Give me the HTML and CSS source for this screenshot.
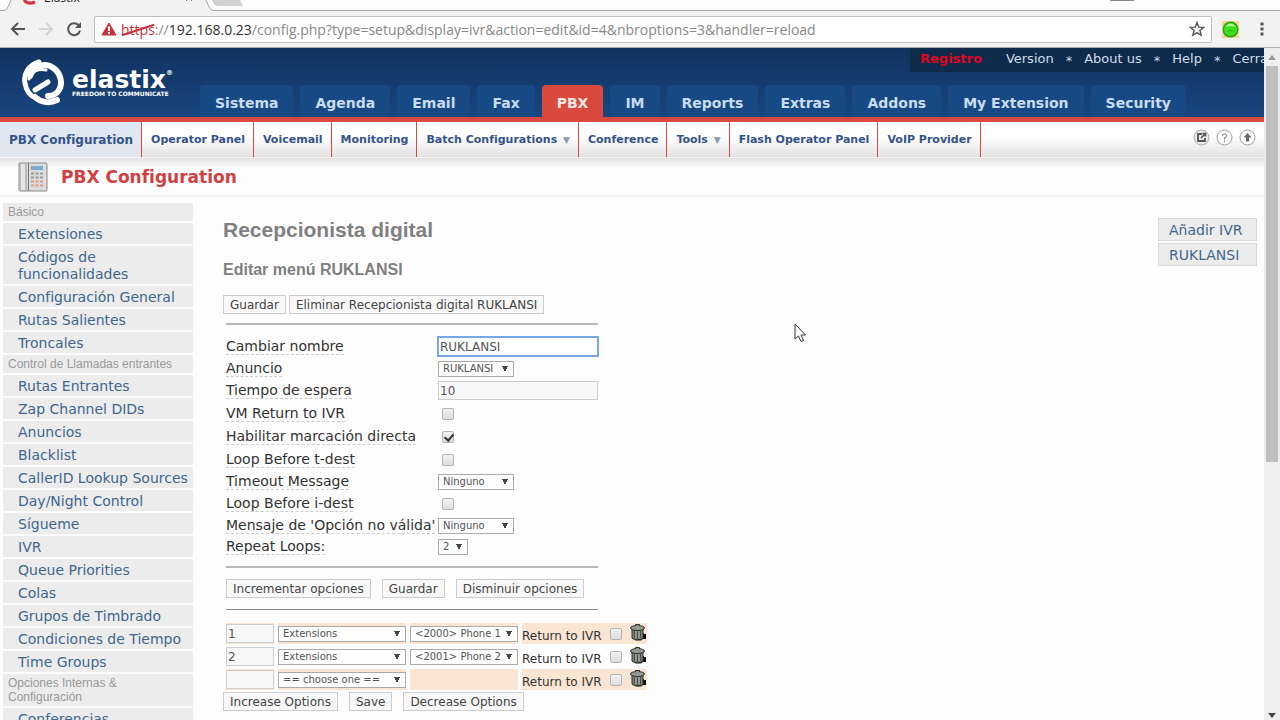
FILE: index.html
```html
<!DOCTYPE html>
<html lang="es">

<head>
  <meta charset="UTF-8">
  <meta name="viewport" content="width=device-width, initial-scale=1.0">
  <title>Elastix</title>
  <link rel="stylesheet" href="styles.css">
</head>

<body>
  <div class="browser">
    <div class="tabstrip">
      <svg class="tab-shape" width="250" height="11" viewBox="0 0 250 11">
        <path d="M0 10.500H4Q7 10 8.500 6L11 0H206L209 7Q210.500 10.500 214 10.500H250V11H0Z" fill="#f2f2f2" />
        <path d="M0 10.500H4Q7 10 8.500 6L11 0M206 0L209 7Q210.500 10.500 214 10.500H250" fill="none" stroke="#aaa" />
        <path d="M212 0H240L243 6H218Q215 6 214 4Z" fill="#d2d2d2" />
        <path d="M24 0Q28 5 35 2" fill="none" stroke="#d8343c" stroke-width="3" />
        <path d="M186 1L190 -3M192 1L188 -3" stroke="#777" />
      </svg>
      <span class="tab-title">Elastix</span>
      <span class="minimize"></span>
    </div>

    <div class="toolbar">
      <button class="tool" aria-label="Back">
        <svg width="16" height="16" viewBox="0 0 16 16"><path d="M15 8H2.500M8 2L2 8L8 14" fill="none" stroke="#555" stroke-width="2" /></svg>
      </button>
      <button class="tool" aria-label="Forward">
        <svg width="16" height="16" viewBox="0 0 16 16"><path d="M1 8H13.500M8 2L14 8L8 14" fill="none" stroke="#d4d4d4" stroke-width="2" /></svg>
      </button>
      <button class="tool" aria-label="Reload">
        <svg width="16" height="16" viewBox="0 0 16 16"><path d="M12.500 4A6 6 0 1 0 14 9.500" fill="none" stroke="#555" stroke-width="2" /><path d="M15 1V7H9Z" fill="#555" /></svg>
      </button>
      <div class="omnibox">
        <svg width="16" height="14" viewBox="0 0 16 14"><path d="M8 1L15 13H1Z" fill="#c5343d" stroke="#c5343d" stroke-linejoin="round" /><path d="M8 4.500V9M8 10V12" stroke="#fff" stroke-width="2" /></svg>
        <label for="url"><span class="scheme">https</span>://<span class="host">192.168.0.23</span></label>
        <input id="url" class="url" value="/config.php?type=setup&amp;display=ivr&amp;action=edit&amp;id=4&amp;nbroptions=3&amp;handler=reload">
        <svg width="16" height="16" viewBox="0 0 16 16"><path d="M8 1.500L9.800 6.100L14.700 6.400L10.900 9.500L12.200 14.300L8 11.600L3.800 14.300L5.100 9.500L1.300 6.400L6.200 6.100Z" fill="none" stroke="#555" stroke-width="1.400" /></svg>
      </div>
      <svg class="extension" width="17" height="17" viewBox="0 0 17 17">
        <rect width="17" height="17" fill="#f4d58b" />
        <circle cx="8.500" cy="8.500" r="8" fill="#28a51c" />
        <circle cx="8.500" cy="8.500" r="6.500" fill="#3fe01d" />
        <path d="M3 6Q8.500 -1 14 6Q8.500 4 3 6Z" fill="#b4f5a0" />
        <path d="M4 11Q8.500 6 13 11Q8.500 9 4 11Z" fill="#22b515" />
      </svg>
      <button class="tool menu" aria-label="Menu">
        <svg width="4" height="14" viewBox="0 0 4 14"><path d="M0.500 0.500h3v3h-3zM0.500 5.500h3v3h-3zM0.500 10.500h3v3h-3z" fill="#555" /></svg>
      </button>
    </div>
  </div>

  <div class="viewport">
    <div class="page">
      <header class="header">
        <div class="brand">
          <svg width="44" height="50" viewBox="0 0 44 50">
            <g fill="none" stroke="#fff" stroke-linecap="round">
              <path d="M18 5C8 8 2 17 4 26C5 33 9 39 15 41" stroke-width="5" />
              <path d="M9 19C12 10 21 6 29 9C38 13 42 23 39 31C37 36 33 39 27 39" stroke-width="6" />
              <path d="M14 40C19 45 28 47 36 43" stroke-width="6" />
              <path d="M14 33L27 25" stroke-width="5" />
              <path d="M8 22C11 14 18 11 25 13" stroke-width="3" />
            </g>
          </svg>
          <div class="brand-text">
            <span class="brand-name">elastix<sup>®</sup></span>
            <span class="brand-slogan">FREEDOM TO COMMUNICATE</span>
          </div>
        </div>
        <div class="header-right">
          <div class="userbar">
            <a href="#" class="register">Registro</a>
            <a href="#">Version</a>
            <span class="star">*</span>
            <a href="#">About us</a>
            <span class="star">*</span>
            <a href="#">Help</a>
            <span class="star">*</span>
            <a href="#">Cerrar</a>
          </div>
          <nav class="tabs">
            <a href="#">Sistema</a>
            <a href="#">Agenda</a>
            <a href="#">Email</a>
            <a href="#">Fax</a>
            <a href="#" class="active">PBX</a>
            <a href="#">IM</a>
            <a href="#">Reports</a>
            <a href="#">Extras</a>
            <a href="#">Addons</a>
            <a href="#">My Extension</a>
            <a href="#">Security</a>
          </nav>
        </div>
      </header>

      <nav class="subnav">
        <a href="#" class="active">PBX Configuration</a>
        <a href="#">Operator Panel</a>
        <a href="#">Voicemail</a>
        <a href="#">Monitoring</a>
        <a href="#">Batch Configurations <span class="caret">▼</span></a>
        <a href="#">Conference</a>
        <a href="#">Tools <span class="caret">▼</span></a>
        <a href="#">Flash Operator Panel</a>
        <a href="#">VoIP Provider</a>
        <div class="subnav-tools">
          <button aria-label="Open in window">
            <svg width="17" height="17" viewBox="0 0 17 17"><circle cx="8.500" cy="8.500" r="7.500" fill="#e8e8e8" stroke="#aaa" /><path d="M9 5H5V12H12V9" fill="none" stroke="#555" stroke-width="1.800" /><path d="M8 9L12 5M9.500 4.500H12.500V7.500" fill="none" stroke="#555" stroke-width="1.600" /></svg>
          </button>
          <button aria-label="Help">
            <svg width="17" height="17" viewBox="0 0 17 17"><circle cx="8.500" cy="8.500" r="7.500" fill="#fff" stroke="#999" /><path d="M6.500 7Q6.500 5 8.500 5T10.500 7Q10.500 8 8.500 9V10.500M8.500 11.500V13" fill="none" stroke="#888" stroke-width="1.200" /></svg>
          </button>
          <button aria-label="Collapse">
            <svg width="17" height="17" viewBox="0 0 17 17"><circle cx="8.500" cy="8.500" r="7.500" fill="#fff" stroke="#999" /><path d="M8.500 4L12.500 8.500H10V12.500H7V8.500H4.500Z" fill="#666" /></svg>
          </button>
        </div>
      </nav>

      <div class="titlebar">
        <svg width="30" height="30" viewBox="0 0 30 30">
          <rect x="1" y="1" width="28" height="28" rx="1" fill="#dcdcdc" stroke="#888" />
          <rect x="2" y="2" width="7" height="26" fill="#bbb" />
          <rect x="3" y="2" width="4" height="26" fill="#e6e6e6" />
          <path d="M10.500 1V29" stroke="#777" />
          <rect x="13" y="4" width="12" height="4" fill="#7ba9d4" />
          <path d="M13 11.500H25M13 15.500H25" stroke="#999" stroke-width="2" stroke-dasharray="3 1.500" />
          <path d="M13 19.500H25M13 23.500H25" stroke="#e0987a" stroke-width="2" stroke-dasharray="3 1.500" />
        </svg>
        <h1>PBX Configuration</h1>
      </div>

      <div class="columns">
        <aside class="sidebar">
          <h4>Básico</h4>
          <a href="#">Extensiones</a>
          <a href="#">Códigos de funcionalidades</a>
          <a href="#">Configuración General</a>
          <a href="#">Rutas Salientes</a>
          <a href="#">Troncales</a>
          <h4>Control de Llamadas entrantes</h4>
          <a href="#">Rutas Entrantes</a>
          <a href="#">Zap Channel DIDs</a>
          <a href="#">Anuncios</a>
          <a href="#">Blacklist</a>
          <a href="#">CallerID Lookup Sources</a>
          <a href="#">Day/Night Control</a>
          <a href="#">Sígueme</a>
          <a href="#">IVR</a>
          <a href="#">Queue Priorities</a>
          <a href="#">Colas</a>
          <a href="#">Grupos de Timbrado</a>
          <a href="#">Condiciones de Tiempo</a>
          <a href="#">Time Groups</a>
          <h4>Opciones Internas &amp; Configuración</h4>
          <a href="#">Conferencias</a>
        </aside>

        <main class="content">
          <h2>Recepcionista digital</h2>
          <h3>Editar menú RUKLANSI</h3>

          <div class="actions">
            <button>Guardar</button>
            <button>Eliminar Recepcionista digital RUKLANSI</button>
          </div>

          <form class="ivr">
            <hr>
            <table class="settings">
              <tr class="row-text">
                <td><label for="name">Cambiar nombre</label></td>
                <td><input type="text" id="name" class="focused" value="RUKLANSI"></td>
              </tr>
              <tr>
                <td><label for="announcement">Anuncio</label></td>
                <td><select id="announcement" class="medium"><option>RUKLANSI</option></select></td>
              </tr>
              <tr class="row-text">
                <td><label for="timeout">Tiempo de espera</label></td>
                <td><input type="text" id="timeout" value="10"></td>
              </tr>
              <tr class="row-check">
                <td><label for="vmreturn">VM Return to IVR</label></td>
                <td><input type="checkbox" id="vmreturn"></td>
              </tr>
              <tr class="row-check">
                <td><label for="directdial">Habilitar marcación directa</label></td>
                <td><input type="checkbox" id="directdial" checked></td>
              </tr>
              <tr class="row-check">
                <td><label for="loopt">Loop Before t-dest</label></td>
                <td><input type="checkbox" id="loopt"></td>
              </tr>
              <tr>
                <td><label for="timeoutmsg">Timeout Message</label></td>
                <td><select id="timeoutmsg" class="medium"><option>Ninguno</option></select></td>
              </tr>
              <tr class="row-check">
                <td><label for="loopi">Loop Before i-dest</label></td>
                <td><input type="checkbox" id="loopi"></td>
              </tr>
              <tr>
                <td><label for="invalidmsg">Mensaje de 'Opción no válida'</label></td>
                <td><select id="invalidmsg" class="medium"><option>Ninguno</option></select></td>
              </tr>
              <tr>
                <td><label for="loops">Repeat Loops:</label></td>
                <td><select id="loops" class="small"><option>2</option></select></td>
              </tr>
            </table>
            <hr>
            <div class="actions spaced">
              <button type="button">Incrementar opciones</button>
              <button type="button">Guardar</button>
              <button type="button">Disminuir opciones</button>
            </div>
            <hr class="dark">
            <table class="options">
              <tr class="odd">
                <td><input type="text" aria-label="Option 1" value="1"></td>
                <td><select class="wide" aria-label="Destination 1"><option>Extensions</option></select></td>
                <td><select class="target" aria-label="Extension 1"><option>&lt;2000&gt; Phone 1</option></select></td>
                <td class="return">
                  <div>
                    <label for="return1">Return to IVR</label>
                    <input type="checkbox" id="return1">
                    <button type="button" class="trash" aria-label="Delete 1"><svg width="17" height="18" viewBox="0 0 17 18"><use href="#trash" /></svg></button>
                  </div>
                </td>
              </tr>
              <tr>
                <td><input type="text" aria-label="Option 2" value="2"></td>
                <td><select class="wide" aria-label="Destination 2"><option>Extensions</option></select></td>
                <td><select class="target" aria-label="Extension 2"><option>&lt;2001&gt; Phone 2</option></select></td>
                <td class="return">
                  <div>
                    <label for="return2">Return to IVR</label>
                    <input type="checkbox" id="return2">
                    <button type="button" class="trash" aria-label="Delete 2"><svg width="17" height="18" viewBox="0 0 17 18"><use href="#trash" /></svg></button>
                  </div>
                </td>
              </tr>
              <tr class="odd">
                <td><input type="text" aria-label="Option 3"></td>
                <td><select class="wide" aria-label="Destination 3"><option>== choose one ==</option></select></td>
                <td></td>
                <td class="return">
                  <div>
                    <label for="return3">Return to IVR</label>
                    <input type="checkbox" id="return3">
                    <button type="button" class="trash" aria-label="Delete 3"><svg width="17" height="18" viewBox="0 0 17 18"><use href="#trash" /></svg></button>
                  </div>
                </td>
              </tr>
            </table>
          </form>

          <div class="actions spaced">
            <button>Increase Options</button>
            <button>Save</button>
            <button>Decrease Options</button>
          </div>
        </main>

        <nav class="ivr-list">
          <a href="#">Añadir IVR</a>
          <a href="#">RUKLANSI</a>
        </nav>
      </div>
    </div>

    <div class="scrollbar">
      <svg width="16" height="18" viewBox="0 0 16 18"><path d="M4 12L8 7L12 12Z" fill="#999" /></svg>
      <div class="thumb"></div>
      <svg width="16" height="10" viewBox="0 0 16 10"><path d="M4 3H12L8 8Z" fill="#444" /></svg>
    </div>
  </div>

  <svg class="pointer" width="13" height="20" viewBox="0 0 13 20">
    <path d="M1 1V16L4.500 13L7 18.500L9.500 17.500L7 12H11.500Z" fill="#fff" stroke="#333" />
  </svg>

  <svg class="symbols" width="0" height="0">
    <symbol id="trash" viewBox="0 0 17 18">
      <path d="M12 10H14V11H16V16H13L11 17.500H5Z" fill="#111" />
      <path d="M2 6H13V15Q13 16.500 7.500 16.500T2 15Z" fill="#7d857c" stroke="#2b302b" />
      <path d="M4.500 8V15M7.500 8.500V16M10.500 8V15" stroke="#4a504a" />
      <path d="M6 8V15.500M9 8V15.500" stroke="#a5ada5" />
      <ellipse cx="7.500" cy="5" rx="7" ry="2.500" fill="#959c95" stroke="#2b302b" />
      <path d="M5.500 3V1.500H9.500V3" fill="#8b928b" stroke="#2b302b" />
    </symbol>
  </svg>
</body>

</html>
```
FILE: styles.css
```css
* {
  box-sizing: border-box;
  margin: 0;
}

body {
  font-family: "DejaVu Sans", sans-serif;
  font-size: 14px;
  height: 100vh;
  display: flex;
  flex-direction: column;
  overflow: hidden;
  background: #fdfdfd;
  color: #333;
}

a {
  text-decoration: none;
}

button,
input,
select {
  font-family: inherit;
}

/* Browser window */
.browser {
  flex: none;
  font-family: "Open Sans", sans-serif;
}

.tabstrip {
  display: flex;
  align-items: flex-start;
  height: 11px;
  overflow: hidden;
  background: linear-gradient(#fdfdfd 10px, #aaa 10px);
}

.tab-shape {
  flex: none;
}

.tab-title {
  font-size: 12px;
  line-height: 16px;
  margin: -10px 0 0 -206px;
  color: #222;
}

.minimize {
  width: 24px;
  height: 1px;
  margin-left: auto;
  margin-right: 146px;
  background: #888;
}

.toolbar {
  display: flex;
  align-items: center;
  gap: 12px;
  height: 37px;
  padding: 0 16px 0 10px;
  background: #f2f2f2;
  border-bottom: 1px solid #a9adb3;
}

.tool {
  display: flex;
  padding: 0;
  border: 0;
  background: none;
}

.omnibox {
  flex: 1;
  display: flex;
  align-items: center;
  height: 27px;
  padding: 0 6px;
  border: 1px solid #bdbdbd;
  border-radius: 2px;
  background: #fff;
  font-size: 14px;
  color: #888;
}

.omnibox label {
  margin-left: 4px;
}

.scheme {
  position: relative;
  color: #c5343d;
}

.scheme::after {
  content: "";
  position: absolute;
  left: 0;
  right: 0;
  top: 9px;
  height: 2px;
  background: #c5343d;
  transform: rotate(-18deg);
}

.host {
  color: #333;
}

.url {
  flex: 1;
  padding: 0;
  border: 0;
  outline: 0;
  font-size: 14px;
  color: #888;
  background: none;
}

.extension {
  margin-left: -2px;
}

.menu {
  margin-left: 9px;
}

/* Viewport */
.viewport {
  flex: 1;
  min-height: 0;
  display: flex;
}

.page {
  flex: 1;
  min-width: 0;
  overflow: hidden;
}

.scrollbar {
  flex: none;
  width: 16px;
  display: flex;
  flex-direction: column;
  justify-content: space-between;
  background: #eee;
}

.thumb {
  height: 59%;
  margin: 0 2px auto;
  background: #bfbfbf;
}

/* Header */
.header {
  display: flex;
  height: 74px;
  background: linear-gradient(#11325f, #184680);
  border-bottom: 5px solid #d9493d;
}

.brand {
  flex: none;
  width: 200px;
  padding: 9px 0 0 21px;
  display: flex;
  gap: 7px;
  color: #fff;
}

.brand-text {
  padding-top: 11px;
  display: flex;
  flex-direction: column;
}

.brand-name {
  font-size: 25px;
  font-weight: bold;
  line-height: 23px;
}

.brand-name sup {
  font-size: 7px;
  line-height: 0;
  vertical-align: 13px;
}

.brand-slogan {
  font-size: 6px;
  font-weight: bold;
  line-height: 6px;
  white-space: nowrap;
}

.header-right {
  flex: 1;
  min-width: 0;
  display: flex;
  flex-direction: column;
  justify-content: space-between;
}

.userbar {
  align-self: flex-end;
  width: 354px;
  height: 24px;
  padding-left: 10px;
  display: flex;
  gap: 12px;
  overflow: hidden;
  white-space: nowrap;
  background: #0e2b4b;
  font-size: 13px;
  line-height: 22px;
}

.userbar a,
.star {
  color: #cfdcec;
}

.userbar .register {
  margin-right: 12px;
  font-weight: bold;
  color: #e0041f;
}

.star {
  line-height: 26px;
}

.tabs {
  display: flex;
  gap: 7px;
}

.tabs a {
  padding: 0 15px;
  border-radius: 4px 4px 0 0;
  background: #174a85;
  color: #c9dcf2;
  font-weight: bold;
  line-height: 36px;
  height: 32px;
  white-space: nowrap;
}

.tabs .active {
  background: #d9493d;
  color: #fbe8e6;
}

.subnav {
  display: flex;
  height: 36px;
  background: linear-gradient(#fff 40%, #e2e2e2);
  border-bottom: 1px solid #f4f4f4;
}

.subnav a {
  padding: 0 8px 0 9px;
  border-right: 1px solid #d9493d;
  color: #34538a;
  font-size: 11px;
  font-weight: bold;
  line-height: 36px;
  white-space: nowrap;
}

.subnav .active {
  background: linear-gradient(#dde7f5, #e2e6ee);
  font-size: 12px;
}

.caret {
  margin-left: 2px;
  color: #8a9cb5;
  font-size: 9px;
}

.subnav-tools {
  display: flex;
  gap: 6px;
  margin: 7px 8px 0 auto;
}

.subnav-tools button {
  display: flex;
  height: 17px;
  padding: 0;
  border: 0;
  background: none;
}

.titlebar {
  display: flex;
  align-items: center;
  gap: 13px;
  height: 39px;
  padding-left: 18px;
  background: linear-gradient(#e2e2e2, #fdfdfd 10px);
  border-bottom: 2px solid #f3f3f3;
}

.titlebar h1 {
  font-size: 17px;
  line-height: 20px;
  color: #cf4142;
}

.columns {
  display: flex;
}

/* Sidebar */
.sidebar {
  flex: none;
  width: 193px;
  padding: 6px 0 0 3px;
}

.sidebar h4,
.sidebar a {
  display: block;
  margin-bottom: 2px;
  padding: 3px 0 1px 15px;
  background: #ececec;
  color: #40678f;
  line-height: 17px;
}

.sidebar h4 {
  padding: 2px 5px;
  font: 12px/14px "Liberation Sans", sans-serif;
  color: #999;
}

.sidebar h4:last-of-type {
  padding-right: 60px;
}

/* Content */
.content {
  flex: 1;
  min-width: 0;
  padding: 21px 0 0 30px;
}

.content h2,
.content h3 {
  font-family: "Liberation Sans", sans-serif;
  color: #808080;
}

.content h2 {
  font-size: 21px;
  line-height: 24px;
  margin-bottom: 18px;
}

.content h3 {
  font-size: 16px;
  line-height: 20px;
  margin-bottom: 15px;
}

.actions {
  display: flex;
  gap: 3px;
}

.actions.spaced {
  gap: 11px;
}

.actions button {
  height: 19px;
  padding: 0 6px;
  border: 1px solid #ccc;
  background: #f8f8f8;
  color: #444;
  font-size: 12px;
  line-height: 16px;
}

.ivr {
  padding: 9px 0 0 3px;
}

.ivr hr {
  width: 372px;
  height: 2px;
  border: 0;
  background: #bbb;
}

.ivr .dark {
  height: 1px;
  background: #888;
}

.ivr .actions {
  padding: 11px 0;
}

/* Settings */
.settings {
  margin: 10px 0 9px;
  border-collapse: collapse;
}

.settings td {
  height: 21px;
  padding: 0;
  line-height: 17px;
  white-space: nowrap;
}

.settings td:first-child {
  width: 212px;
}

.settings .row-text td,
.settings .row-check td {
  height: 23px;
}

.settings label {
  border-bottom: 1px dashed #ccc;
}

input[type="text"] {
  display: block;
  height: 19px;
  padding: 0 1px;
  border: 1px solid #ccc;
  background: #f8f8f8;
  color: #555;
  font-size: 12px;
}

.settings input[type="text"] {
  width: 160px;
}

.settings .focused {
  outline: 1px solid #77a7e8;
  border-color: #77a7e8;
  background: #fff;
}

input[type="checkbox"] {
  display: block;
  appearance: none;
  width: 12px;
  height: 12px;
  border: 1px solid #b4b4b4;
  border-radius: 2px;
  background: linear-gradient(#f2f2f2, #dedede);
}

.settings input[type="checkbox"] {
  margin-left: 4px;
}

input[type="checkbox"]:checked::before {
  content: "";
  display: block;
  width: 4px;
  height: 7px;
  margin: 0 0 0 3px;
  border: solid #333;
  border-width: 0 2px 2px 0;
  transform: rotate(40deg);
}

select {
  display: block;
  appearance: none;
  height: 16px;
  padding: 0 4px;
  border: 1px solid #aaa;
  border-radius: 0;
  background:
    linear-gradient(to top right, transparent 50%, #444 50%) right 8px top 4px / 3px 6px no-repeat,
    linear-gradient(to top left, transparent 50%, #444 50%) right 5px top 4px / 3px 6px no-repeat,
    #fdfdfd;
  color: #555;
  font-size: 10px;
}

.small {
  width: 30px;
}

.medium {
  width: 76px;
}

.wide {
  width: 128px;
}

.target {
  width: 108px;
}

/* Options */
.options {
  margin: 11px 0 0 -4px;
  border-spacing: 4px 2px;
}

.options td {
  height: 21px;
  padding: 0;
}

.options .odd td {
  background: #fae5d3;
}

.options input[type="text"] {
  width: 48px;
}

.return div {
  display: flex;
  align-items: center;
  gap: 8px;
  height: 21px;
  font-size: 12px;
}

.return label {
  padding-top: 4px;
}

.trash {
  display: flex;
  align-self: flex-start;
  padding: 0;
  border: 0;
  background: none;
}

/* IVR list */
.ivr-list {
  flex: none;
  width: 106px;
  padding: 21px 7px 0 0;
  display: flex;
  flex-direction: column;
  gap: 2px;
}

.ivr-list a {
  padding: 1px 10px 0;
  border: 1px solid #d8d8d8;
  background: #ececec;
  color: #40678f;
  line-height: 20px;
}

/* Mouse pointer, over the page */
.pointer {
  position: absolute;
  left: 794px;
  top: 323px;
}

.symbols {
  position: absolute;
}
```
